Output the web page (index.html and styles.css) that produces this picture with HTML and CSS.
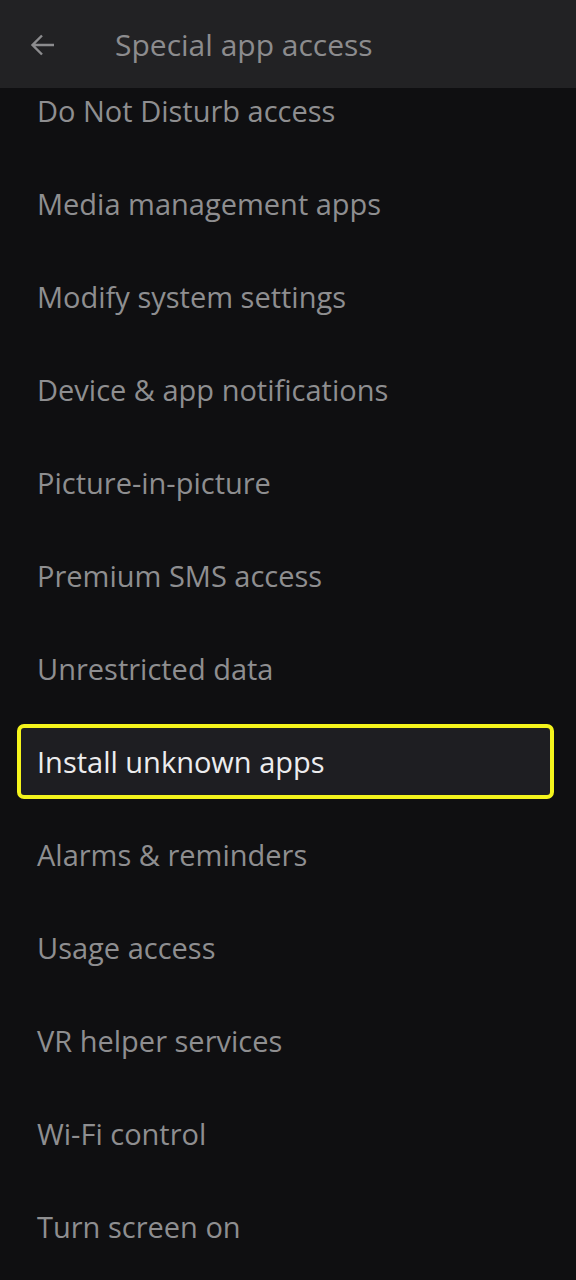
FILE: index.html
```html
<!DOCTYPE html>
<html lang="en">
<head>
    <meta charset="UTF-8">
    <meta name="viewport" content="width=device-width, initial-scale=1.0">
    <title>Special app access</title>
    <link rel="stylesheet" href="styles.css">
</head>
<body>
    <div class="app-bar">
        <span class="back">
            <svg width="26" height="26" viewBox="0 0 26 26"><path d="M24 13H3M12 3.5L2.5 13l9.5 9.5" fill="none" stroke="currentColor" stroke-width="2.4"/></svg>
        </span>
        <h1 class="title">Special app access</h1>
    </div>

    <div class="scroller">
        <ul class="list">
            <li class="item">Do Not Disturb access</li>
            <li class="item">Media management apps</li>
            <li class="item">Modify system settings</li>
            <li class="item">Device &amp; app notifications</li>
            <li class="item">Picture-in-picture</li>
            <li class="item">Premium SMS access</li>
            <li class="item">Unrestricted data</li>
            <li class="item selected">Install unknown apps</li>
            <li class="item">Alarms &amp; reminders</li>
            <li class="item">Usage access</li>
            <li class="item">VR helper services</li>
            <li class="item">Wi-Fi control</li>
            <li class="item">Turn screen on</li>
        </ul>
    </div>
</body>
</html>
```

FILE: styles.css
```css
body{
    margin: 0;
    height: 1280px;
    overflow: hidden;
    background-color: #0f0f11;
    font-family: "Open Sans", Roboto, sans-serif;
}

.app-bar{
    height: 88px;
    display: flex;
    align-items: center;
    background-color: #222224;
    position: relative;
    z-index: 1;
}
.back{
    display: flex;
    margin: 2px 0 0 30px;
    color: #8c8c8e;
}
.title{
    margin: 0 0 0 59px;
    font-size: 30px;
    font-weight: 400;
    color: #8c8c8e;
}

/* list is scrolled a bit under the app bar */
.scroller{
    height: 1192px;
    overflow: hidden;
}
.list{
    list-style: none;
    margin: -24px 0 0;
    padding: 0;
}
.item{
    height: 93px;
    display: flex;
    align-items: center;
    padding-left: 37px;
    font-size: 29px;
    color: #8e8e90;
    box-sizing: border-box;
}
.item.selected{
    margin: 9px 22px 9px 17px;
    padding-left: 16px;
    height: 75px;
    border: 4px solid #f4f41c;
    border-radius: 7px;
    background-color: #1e1e22;
    color: #ececee;
}
```
